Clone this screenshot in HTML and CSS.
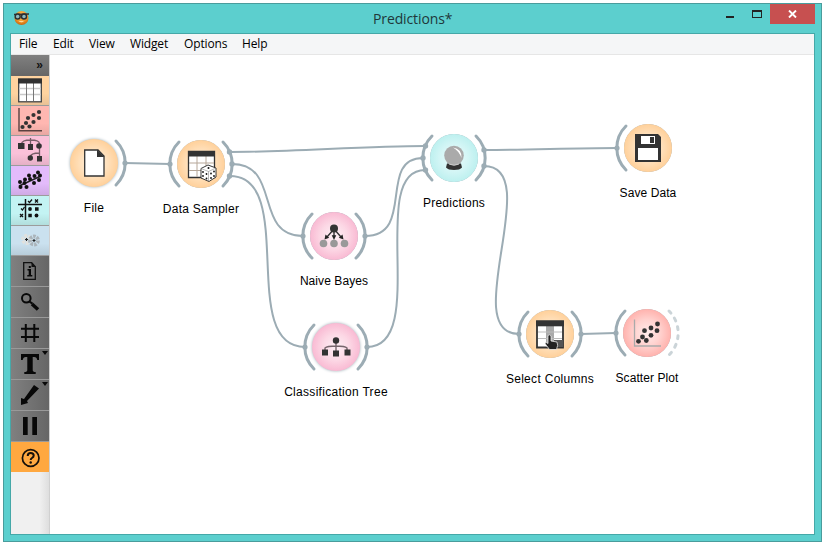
FILE: index.html
```html
<!DOCTYPE html>
<html lang="en">
<head>
<meta charset="utf-8">
<title>Predictions*</title>
<link rel="stylesheet" href="styles.css">
</head>
<body>
<div class="window">
  <header class="titlebar">
    <svg class="app-icon" width="18" height="16" viewBox="0 0 18 16">
      <defs><radialGradient id="face" cx=".5" cy=".35" r=".65"><stop offset="0" stop-color="#ffc65e"/><stop offset=".6" stop-color="#f39a2b"/><stop offset="1" stop-color="#c8660f"/></radialGradient></defs>
      <circle cx="8.5" cy="8" r="7" fill="url(#face)"/>
      <path d="M1 4.5L16 4" stroke="#333" stroke-width="1.4"/>
      <circle cx="4.7" cy="6.500" r="2.5" fill="#8fb9bd" stroke="#292f31" stroke-width="1.4"/>
      <circle cx="11" cy="6.500" r="2.5" fill="#8fb9bd" stroke="#292f31" stroke-width="1.4"/>
      <path d="M5.500 11.200q3 2.300 5.500 0z" fill="#fff0c0"/>
    </svg>
    <h1 class="title">Predictions*</h1>
    <div class="controls">
      <span class="minimize"></span>
      <span class="maximize"></span>
      <span class="close"><svg width="9" height="8" viewBox="0 0 9 8"><path d="M1 .5L8 7.5M8 .5L1 7.5" stroke="#fff" stroke-width="1.900"/></svg></span>
    </div>
  </header>
  <div class="client">
    <nav class="menu"><span>File</span><span>Edit</span><span>View</span><span>Widget</span><span>Options</span><span>Help</span></nav>
    <div class="workspace">
      <aside class="sidebar">
        <div class="expand">»</div>
        <div class="category data">
          <svg viewBox="0 0 38 29"><rect x="7.700" y="3.200" width="22.600" height="22.600" fill="#fff" stroke="#444" stroke-width="1.300"/><path d="M8 12.500h22M8 18.500h22" stroke="#c9c9c9" stroke-width="1.600"/><path d="M15.500 7v18M22.500 7v18" stroke="#777"/><path d="M7 2.500h24v5H7z" fill="#303030"/></svg>
        </div>
        <div class="category visualize">
          <svg viewBox="0 0 38 29"><path d="M8 2v22.700h23" fill="none" stroke="#5b4140" stroke-width="1.400"/><g fill="#333"><circle cx="28" cy="6" r="2.100"/><circle cx="22.500" cy="9" r="2.100"/><circle cx="28" cy="12" r="2.100"/><circle cx="17" cy="12" r="2.100"/><circle cx="22.500" cy="16" r="2.100"/><circle cx="15" cy="17" r="2.100"/><circle cx="11.500" cy="21" r="2.100"/><circle cx="18.500" cy="20.500" r="2.100"/></g></svg>
        </div>
        <div class="category classify">
          <svg viewBox="0 0 38 29"><path d="M19.500 2v10M10.500 8q0-4 9-4t9 4V24M19.500 21q0-4 9-4" fill="none" stroke="#765d67" stroke-width="1.300"/><g fill="#333"><path d="M7 7h6.500v6H7zM17 8h5v6h-5zM26 20h5v5.500h-5z"/><circle cx="28" cy="10" r="2.800"/><circle cx="19.300" cy="22" r="2.700"/></g></svg>
        </div>
        <div class="category regression">
          <svg viewBox="0 0 38 29"><path d="M8 20L30 10" stroke="#222" stroke-width="1.500"/><g fill="#111"><circle cx="27" cy="6.500" r="2"/><circle cx="18" cy="9.500" r="2"/><circle cx="23.500" cy="10" r="2"/><circle cx="29" cy="9.500" r="2"/><circle cx="28" cy="14" r="2"/><circle cx="14" cy="13.500" r="2"/><circle cx="19" cy="13" r="2"/><circle cx="23" cy="17" r="2"/><circle cx="9" cy="16" r="2"/><circle cx="13.500" cy="17" r="2"/><circle cx="9.500" cy="21" r="2"/><circle cx="15.500" cy="21" r="2"/></g></svg>
        </div>
        <div class="category evaluate">
          <svg viewBox="0 0 38 29"><path d="M7 8.500h24M14.500 3v21" stroke="#111" stroke-width="1.500"/><g fill="none" stroke="#111" stroke-width="1.300"><path d="M17 5l1.500 1.500 2.500-3M10 12.500l1.500 1.500 2-3M24 3.500l3 3M27 3.500l-3 3M9 18l3 3M12 18l-3 3"/></g><g fill="#111"><circle cx="19" cy="13" r="1.900"/><circle cx="25.500" cy="19.500" r="1.900"/><path d="M24 11.300h3.600v3.500H24zM17.300 17.700h3.500v3.500h-3.500z"/></g></svg>
        </div>
        <div class="category unsupervised">
          <svg viewBox="0 0 38 29"><g fill="none" stroke-width="3.800" stroke-dasharray="2.500 1"><circle cx="15.500" cy="13.500" r="3.500" stroke="#e2e1dd"/><circle cx="23" cy="14.500" r="4" stroke="#abb4ba"/></g><path d="M15.500 12v3M14 13.500h3M23 13v3M21.500 14.500h3" stroke="#222" stroke-width="1.100"/></svg>
        </div>
        <div class="tool">
          <svg viewBox="0 0 38 30"><path d="M12.700 6.700h8l3.600 4v12.600H12.700z" fill="none" stroke="#111" stroke-width="1.300"/><path d="M20.500 6.500v4.500H25" fill="#111"/><path d="M17.800 10h2v2h-2zM16.500 13h3.500v6h1.300v1.500h-5V19h1.400v-4.500h-1.200z" fill="#080808"/></svg>
        </div>
        <div class="tool">
          <svg viewBox="0 0 38 30"><circle cx="15.300" cy="11.200" r="4.300" fill="none" stroke="#080808" stroke-width="2"/><path d="M18.500 14.700l3 2" stroke="#080808" stroke-width="2"/><path d="M21 17l6 5.500" stroke="#080808" stroke-width="3.500"/></svg>
        </div>
        <div class="tool">
          <svg viewBox="0 0 38 30"><path d="M14.800 6v18M23.300 6v18M10 10.700h18M10 19h18" stroke="#080808" stroke-width="2"/></svg>
        </div>
        <div class="tool">
          <svg viewBox="0 0 38 30"><path d="M10 5h18v6h-1.700q-.5-3-3-3h-1.600v13q0 2 3 2v2H13.300v-2q3 0 3-2V8h-1.600q-2.500 0-3 3H10z" fill="#080808"/><path d="M31 2h6l-3 4z" fill="#080808"/></svg>
        </div>
        <div class="tool">
          <svg viewBox="0 0 38 30"><path d="M10 25v-7l3 1L23 5l5 3.500-12 12.500 1 2z" fill="#080808"/><path d="M31 2h6l-3 4z" fill="#080808"/></svg>
        </div>
        <div class="tool">
          <svg viewBox="0 0 38 30"><path d="M12 6h4.700v18H12zM21.300 6H26v18h-4.700z" fill="#080808"/></svg>
        </div>
        <div class="help">
          <svg viewBox="0 0 38 30"><circle cx="19.700" cy="16" r="8.300" fill="none" stroke="#15100a" stroke-width="1.700"/><path d="M16.700 14q0-3 3-3t3 2.500q0 1.500-1.700 2.500-1.300.8-1.300 2" fill="none" stroke="#15100a" stroke-width="2"/><circle cx="19.700" cy="20.500" r="1.200" fill="#15100a"/></svg>
        </div>
      </aside>
      <main class="canvas">
        <svg class="links" viewBox="50 55 764 479">
          <path d="M125 163L170 164"/>
          <path d="M230 152C290 152 365 146 425 146"/>
          <path d="M232 164C282 164 253 236 303 236"/>
          <path d="M230 176C298 176 237 347 305 347"/>
          <path d="M365 236C416 236 377 158 423 158"/>
          <path d="M367 347C430 347 366 170 425 170"/>
          <path d="M484 150C530 150 570 148 617 148"/>
          <path d="M484 166C546 166 457 334 519 334"/>
          <path d="M581 334L616 333"/>
        </svg>

        <div class="node file">
          <svg viewBox="-36 -30 72 60">
            <defs>
              <radialGradient id="orange"><stop offset="0" stop-color="#fff4e6"/><stop offset=".55" stop-color="#ffe1bd"/><stop offset="1" stop-color="#ffd09a"/></radialGradient>
              <radialGradient id="pink"><stop offset="0" stop-color="#fdf0f5"/><stop offset=".55" stop-color="#fcd8e5"/><stop offset="1" stop-color="#f9bad3"/></radialGradient>
              <radialGradient id="cyan"><stop offset="0" stop-color="#eafcfc"/><stop offset=".55" stop-color="#d5f6f6"/><stop offset="1" stop-color="#bdf0ef"/></radialGradient>
              <radialGradient id="red"><stop offset="0" stop-color="#ffeceb"/><stop offset=".55" stop-color="#ffd2cf"/><stop offset="1" stop-color="#ffb2ad"/></radialGradient>
            </defs>
            <circle class="disc glow" r="24" fill="url(#orange)"/>
            <path class="arc" d="M22-22A31 31 0 0 1 22 22"/><circle class="port" cx="31" r="2.600"/>
            <path d="M-9.300-13H4l6 6v20H-9.300z" fill="#fff" stroke="#333" stroke-width="1.300"/><path d="M3-13.500L10.500-6H3z" fill="#333"/>
          </svg>
          <p>File</p>
        </div>

        <div class="node sampler">
          <svg viewBox="-36 -30 72 60">
            <circle class="disc" r="24" fill="url(#orange)"/>
            <path class="arc" d="M-22-22A31 31 0 0 0-22 22M22-22A31 31 0 0 1 22 22"/>
            <g class="port"><circle cx="-31" r="2.600"/><circle cx="28.500" cy="-12" r="2.700"/><circle cx="31" r="2.700"/><circle cx="28.500" cy="12" r="2.700"/></g>
            <path d="M-12.500-12.500h26v26h-26z" fill="#fff" stroke="#333" stroke-width="1.300"/><path d="M-12-1h25M-12 6.500h25M-4-8v21M5-8v21" stroke="#b6a799"/><path d="M-13-13h27v5.500h-27z" fill="#333"/>
            <path d="M0 4.500L7 1l8 3v9l-7 4.500-8-3.500z" fill="#fff" stroke="#222" stroke-width=".9"/><path d="M0 4.500l7.500 3L15 4M7.500 7.500V17" fill="none" stroke="#888" stroke-width=".6"/><g fill="#111"><circle cx="7.500" cy="4" r="1"/><circle cx="2" cy="8" r=".9"/><circle cx="5.500" cy="10" r=".9"/><circle cx="2" cy="12" r=".9"/><circle cx="5.500" cy="14.500" r=".9"/><circle cx="10" cy="9.500" r=".9"/><circle cx="13" cy="7.500" r=".9"/><circle cx="10" cy="14" r=".9"/><circle cx="13" cy="12" r=".9"/></g>
          </svg>
          <p>Data Sampler</p>
        </div>

        <div class="node bayes">
          <svg viewBox="-36 -30 72 60">
            <circle class="disc" r="24" fill="url(#pink)"/>
            <path class="arc" d="M-22-22A31 31 0 0 0-22 22M22-22A31 31 0 0 1 22 22"/>
            <g class="port"><circle cx="-31" r="2.600"/><circle cx="31" r="2.600"/></g>
            <g fill="#999"><circle cx="-10.500" cy="7.500" r="3.800"/><circle cy="7.500" r="3.800"/><circle cx="10.500" cy="7.500" r="3.800"/></g>
            <path d="M0-7L-7 1M0-7V1M0-7L7 1" stroke="#333" stroke-width="1.400"/><path d="M-9.500 3.500l1-5 3.700 3.300zM-2.300-.8h4.600L0 4zM9.500 3.500l-1-5L4.800 1.800z" fill="#222"/><circle cy="-7.500" r="4" fill="#333"/>
          </svg>
          <p>Naive Bayes</p>
        </div>

        <div class="node tree">
          <svg viewBox="-36 -30 72 60">
            <circle class="disc glow" r="24" fill="url(#pink)"/>
            <path class="arc" d="M-22-22A31 31 0 0 0-22 22M22-22A31 31 0 0 1 22 22"/>
            <g class="port"><circle cx="-31" r="2.600"/><circle cx="31" r="2.600"/></g>
            <path d="M0-5V5M-11 4V1Q-9-1 0-1T11 1V4" fill="none" stroke="#77666d" stroke-width="1.400"/><circle cy="-6.500" r="3.200" fill="#333"/><path d="M-14 2.500h6v6h-6zM-3 3.500h6v6h-6zM8.500 2.500h6v6h-6z" fill="#333"/>
          </svg>
          <p>Classification Tree</p>
        </div>

        <div class="node predictions">
          <svg viewBox="-36 -30 72 60">
            <circle class="disc" r="24" fill="url(#cyan)"/>
            <path class="arc" d="M-22-22A31 31 0 0 0-22 22M22-22A31 31 0 0 1 22 22"/>
            <g class="port"><circle cx="-28.500" cy="-12" r="2.700"/><circle cx="-31" r="2.700"/><circle cx="-28.500" cy="12" r="2.700"/><circle cx="30" cy="-8" r="2.700"/><circle cx="30" cy="8" r="2.700"/></g>
            <path d="M-7 5.500H7L8 9.500Q6 12 0 12T-8 9.500z" fill="#333"/><circle cy="-2.500" r="9.800" fill="#aaa"/><path d="M-1-10.500Q8-9 7.500 0Q5-7-1-10.500z" fill="#fff"/><path d="M-5 6q5 2.500 10 0" fill="none" stroke="#ccc"/>
          </svg>
          <p>Predictions</p>
        </div>

        <div class="node save">
          <svg viewBox="-36 -30 72 60">
            <circle class="disc" r="24" fill="url(#orange)"/>
            <path class="arc" d="M-22-22A31 31 0 0 0-22 22"/><circle class="port" cx="-31" r="2.600"/>
            <path d="M-13-14H10l3 3v25h-26z" fill="#333"/><path d="M-10 0h20v12h-20zM-7-12H7v8H-7z" fill="#fff"/><path d="M2-11h4v6H2z" fill="#333"/>
          </svg>
          <p>Save Data</p>
        </div>

        <div class="node columns">
          <svg viewBox="-36 -30 72 60">
            <circle class="disc" r="24" fill="url(#orange)"/>
            <path class="arc" d="M-22-22A31 31 0 0 0-22 22M22-22A31 31 0 0 1 22 22"/>
            <g class="port"><circle cx="-31" r="2.600"/><circle cx="31" r="2.600"/></g>
            <path d="M-13-12.500h26v26h-26z" fill="#fff" stroke="#333" stroke-width="1.800"/><path d="M-4-8h8v21h-8z" fill="#aaa"/><path d="M4 6h9v7H4z" fill="#555"/><path d="M-12-2h24M-12 4.500h24" stroke="#bbb"/><path d="M-14-13.500h28v5.800h-28z" fill="#333"/>
            <path d="M-2 1.500q1.500-1.500 3 .5V7l6 1q1.500 3-.5 7.500H-.5L-5 9.500q1-2 3 0z" fill="#222" stroke="#fff" stroke-width=".7"/>
          </svg>
          <p>Select Columns</p>
        </div>

        <div class="node scatter">
          <svg viewBox="-36 -30 72 60">
            <circle class="disc" r="24" fill="url(#red)"/>
            <path class="arc" d="M-22-22A31 31 0 0 0-22 22"/><circle class="port" cx="-31" r="2.600"/>
            <path class="arc open" d="M22-22A31 31 0 0 1 22 22"/>
            <path d="M-12.500-13.500V13H14" fill="none" stroke="#aaa" stroke-width="1.300"/>
            <g fill="#333"><circle cx="10.500" cy="-9" r="2.400"/><circle cx="4" cy="-5" r="2.400"/><circle cx="10" cy="-2.300" r="2.400"/><circle cx="-2.500" cy="-2.300" r="2.400"/><circle cx="4" cy="2.300" r="2.400"/><circle cx="-4.500" cy="4" r="2.400"/><circle cx="-8.500" cy="8.300" r="2.400"/><circle cx="-.7" cy="7.500" r="2.400"/></g>
          </svg>
          <p>Scatter Plot</p>
        </div>
      </main>
    </div>
  </div>
</div>
</body>
</html>
```
FILE: styles.css
```css
* { box-sizing: border-box; }
body { margin: 0; background: #fff; overflow: hidden; }
svg { display: block; }

.window {
  width: 819px;
  height: 539px;
  margin: 3px;
  padding: 0 6px 6px;
  border: 1px solid #4a9c9c;
  background: #5ccfce;
  display: flex;
  flex-direction: column;
}
.titlebar { height: 29px; display: flex; align-items: flex-start; }
.app-icon { flex: none; margin: 6px 0 0 3px; width: 18px; }
.title {
  margin: 5px 0 0 342px;
  font: 400 14px/20px "Open Sans", sans-serif;
  letter-spacing: -.12px;
  color: #20383a;
}
.controls { display: flex; margin-left: auto; }
.minimize { width: 8px; height: 2px; margin: 12px 18px 0 0; background: #222; }
.maximize { width: 10px; height: 8px; margin: 6px 8px 0 0; border: 1px solid #222; border-top-width: 2px; }
.close { width: 45px; height: 20px; background: #c75050; display: flex; align-items: center; justify-content: center; }

.client {
  flex: 1;
  border: 1px solid #45a8a8;
  background: #fff;
  display: flex;
  flex-direction: column;
}
.menu {
  height: 21px;
  padding: 0 8px;
  display: flex;
  background: #f5f6f7;
  border-bottom: 1px solid #e6e6e6;
  font: 400 12px/20px "Open Sans", sans-serif;
  letter-spacing: -.15px;
  color: #000;
}
.menu span { flex: none; }
.menu span:nth-child(1) { width: 34px; }
.menu span:nth-child(2) { width: 36px; }
.menu span:nth-child(3) { width: 41px; }
.menu span:nth-child(4) { width: 54px; }
.menu span:nth-child(5) { width: 58px; }

.workspace { flex: 1; display: flex; }
.sidebar {
  width: 39px;
  border-right: 1px solid #d0d0d0;
  background: linear-gradient(90deg, #f0f0f0 75%, #dedede);
  display: flex;
  flex-direction: column;
}
.expand {
  height: 21px;
  padding-right: 6px;
  background: linear-gradient(#808080, #666);
  font: 700 12px/21px "Liberation Sans", sans-serif;
  text-align: right;
  color: #111;
}
.category { height: 30px; border-bottom: 1px solid #9c9c9c; }
.category svg { width: 38px; height: 29px; }
.data { background: linear-gradient(#ffd39f 60%, #e9c195); }
.visualize { background: linear-gradient(#ffb7b1 60%, #e9a7a2); }
.classify { background: linear-gradient(#fac1d9 60%, #e5b0c6); }
.regression { background: linear-gradient(#e3bbfb 60%, #cfaae5); }
.evaluate { background: linear-gradient(#c3f3f3 60%, #b2dedd); }
.unsupervised { background: linear-gradient(#cae1ef 60%, #b8cdda); }
.tool {
  height: 31px;
  border-bottom: 1px solid #999;
  background: linear-gradient(90deg, #808080, #666);
}
.tool svg, .help svg { width: 38px; height: 30px; }
.help { height: 30px; background: #ffa840; }

.canvas { position: relative; flex: 1; background: #fff; }
.links { width: 764px; height: 479px; fill: none; stroke: #9cacb4; stroke-width: 2; }
.node { position: absolute; width: 140px; margin: -30px 0 0 -70px; }
.node svg { width: 72px; height: 60px; margin: 0 auto; overflow: visible; }
.node p {
  margin: 7px 0 0;
  font: 400 12px/16px "Liberation Sans", sans-serif;
  letter-spacing: .25px;
  text-align: center;
  white-space: nowrap;
  color: #000;
}
.disc { filter: drop-shadow(0 0 .7px #9cacb4); }
.glow { filter: drop-shadow(0 0 1.800px #9cacb4); }
.arc { fill: none; stroke: #9cacb4; stroke-width: 3; stroke-linecap: round; }
.open { stroke: #cbd4d8; stroke-dasharray: 3 6; }
.port { fill: #9cacb4; }

.file { left: 44px; top: 108px; }
.sampler { left: 151px; top: 109px; }
.bayes { left: 284px; top: 181px; }
.tree { left: 286px; top: 292px; }
.predictions { left: 404px; top: 103px; }
.save { left: 598px; top: 93px; }
.columns { left: 500px; top: 279px; }
.scatter { left: 597px; top: 278px; }
.bayes p, .save p, .scatter p { letter-spacing: .08px; }
.tree p, .columns p { letter-spacing: .3px; }
```
